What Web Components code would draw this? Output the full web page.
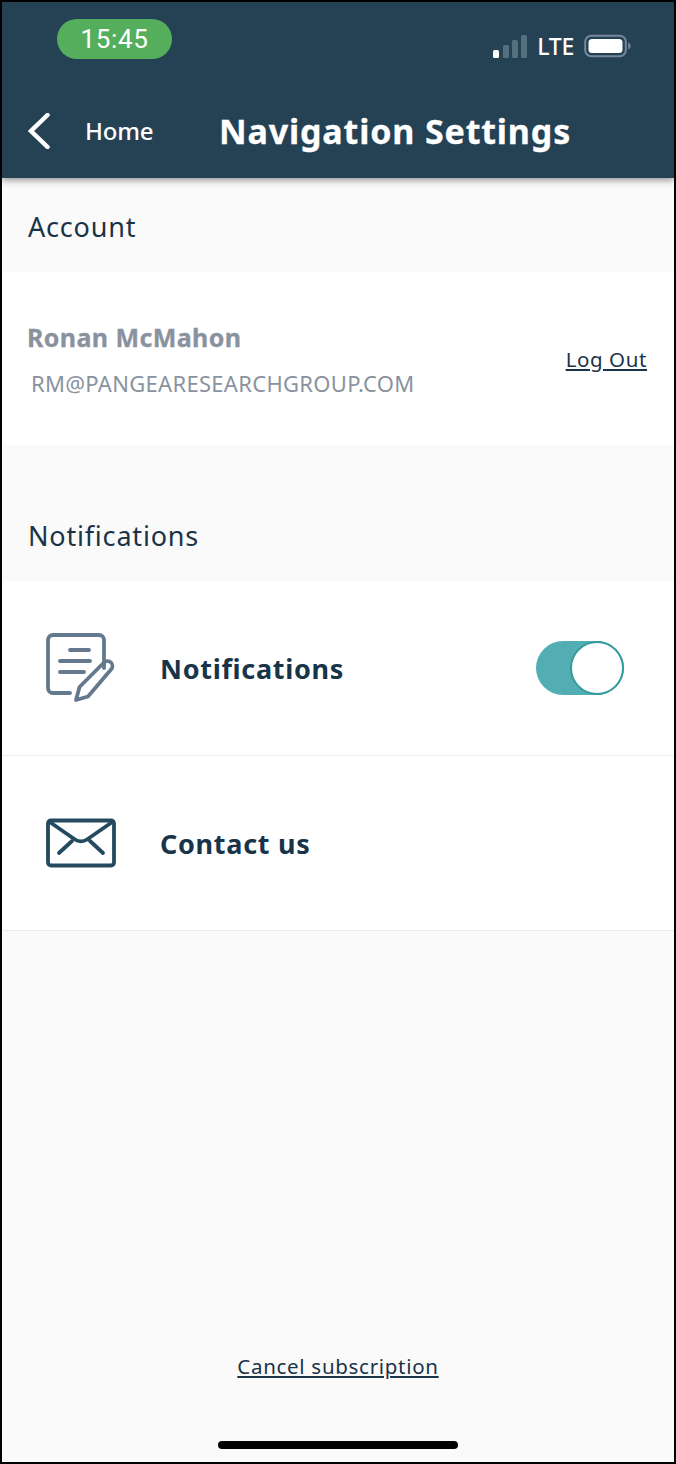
<!DOCTYPE html>
<html lang="en"><head><meta charset="utf-8"><title>Navigation Settings</title>
<style>
html,body{margin:0;padding:0;background:#fafafa}
body{width:676px;height:1464px;font-family:"Noto Sans","Open Sans",sans-serif;overflow:hidden}
</style></head><body>
<phone-frame>
  <app-header title="Navigation Settings" back="Home"></app-header>
  <section-title style="height:94px;padding-top:4px">Account</section-title>
  <account-card name="Ronan McMahon" email="RM@PANGEARESEARCHGROUP.COM" action="Log Out"></account-card>
  <section-title style="height:136px;padding-top:46px">Notifications</section-title>
  <setting-row label="Notifications" icon="note" toggle></setting-row>
  <setting-row label="Contact us" icon="mail"></setting-row>
  <page-footer link="Cancel subscription"></page-footer>
</phone-frame>
<script>
function def(name, html){
  customElements.define(name, class extends HTMLElement{
    connectedCallback(){
      if(this.shadowRoot) return;
      const r=this.attachShadow({mode:'open'});
      r.innerHTML = typeof html==='function' ? html(this) : html;
    }
  });
}
def('phone-frame',`<style>:host{display:flex;flex-direction:column;box-sizing:border-box;width:676px;height:1464px;border:2px solid #000;background:#fafafa}</style><slot></slot>`);
def('app-header',h=>`<style>
:host{display:block;height:176px;background:#254154;color:#fff;box-shadow:0 2px 7px rgba(0,0,0,.45);position:relative;z-index:1;flex:none}
.status{display:flex;justify-content:space-between;align-items:flex-start;padding:17px 43px 0 55px;height:87px;box-sizing:border-box}
.pill{width:115px;height:40px;border-radius:20px;background:#55ae5c;font:400 26px/41px Roboto,sans-serif;text-align:center;letter-spacing:.7px}
.right{display:flex;align-items:center;gap:9px;margin-top:14px}
.lte{font:500 23px/26px "Noto Sans",sans-serif;letter-spacing:-.3px;margin:0 1px 0 0}
.nav{display:flex;align-items:center;height:84px;padding-left:26px}
.home{font:500 24px/30px "Noto Sans",sans-serif;margin-left:35px;width:134px;letter-spacing:-.2px}
.title{font:700 34px/46px "Noto Sans",sans-serif;letter-spacing:.85px;white-space:nowrap;-webkit-text-stroke:.3px #fff}
svg{display:block}
</style>
<div class="status"><div class="pill">15:45</div>
<div class="right">
<svg width="35" height="24" viewBox="0 0 35 24"><rect x="0" y="16" width="6" height="8" rx="1.500" fill="#fff"/><rect x="10" y="11" width="6" height="13" rx="1.500" fill="#54707f"/><rect x="19" y="6" width="6" height="18" rx="1.500" fill="#54707f"/><rect x="28" y="1" width="6" height="23" rx="1.500" fill="#54707f"/></svg>
<span class="lte">LTE</span>
<svg width="47" height="24" viewBox="0 0 47 24"><rect x="1.200" y="1.700" width="40.600" height="20.600" rx="6" fill="none" stroke="#76889a" stroke-width="2"/><rect x="4.500" y="5" width="34" height="14" rx="3.500" fill="#fff"/><path d="M44.200 8.500c1.600.6 2.400 2 2.400 3.500s-.8 2.900-2.400 3.500z" fill="#76889a"/></svg>
</div></div>
<div class="nav">
<svg width="22" height="36" viewBox="0 0 22 36" fill="none" stroke="#fff" stroke-width="4.500" stroke-linecap="round"><path d="M19.500 2 L3 18 L19.500 34"/></svg>
<span class="home">${h.getAttribute('back')}</span>
<span class="title">${h.getAttribute('title')}</span>
</div>`);
def('section-title',`<style>:host{display:flex;align-items:center;box-sizing:border-box;padding-left:26px;font:400 27px/36px "Noto Sans",sans-serif;color:#1b3347;letter-spacing:.8px;flex:none;background:#fafafa}</style><slot></slot>`);
def('account-card',h=>`<style>
:host{display:flex;align-items:center;justify-content:space-between;box-sizing:border-box;height:173px;padding:0 27px 0 25px;background:#fff;flex:none}
.name{font:700 25px/34px "Noto Sans",sans-serif;color:#8a92a0;letter-spacing:.4px;margin-top:-1px;-webkit-text-stroke:.3px #8a92a0}
.mail{font:400 22px/28px "Noto Sans",sans-serif;color:#8a92a0;margin:15px 0 0 4px;letter-spacing:.3px}
a{font:400 20.500px/28px "Noto Sans",sans-serif;color:#1b3347;text-decoration:underline;letter-spacing:.6px}
</style><div><div class="name">${h.getAttribute('name')}</div><div class="mail">${h.getAttribute('email')}</div></div><a href="#">${h.getAttribute('action')}</a>`);
const icons={
note:`<svg width="70" height="70" viewBox="0 0 70 70" fill="none" stroke="#64798e" stroke-width="3.800" stroke-linecap="round" stroke-linejoin="round"><path d="M24 60H7a5 5 0 0 1-5-5V7a5 5 0 0 1 5-5h46a5 5 0 0 1 5 5v28"/><path d="M24 17h19M14 28h30M14 39h24"/><path d="M30 67l3.500-13L58 29.500a5 5 0 0 1 7 0 5 5 0 0 1 0 7L42 63.500z"/></svg>`,
mail:`<svg width="70" height="50" viewBox="0 0 70 50" fill="none" stroke="#254a60" stroke-width="3.800" stroke-linecap="round" stroke-linejoin="round"><rect x="2" y="2.500" width="66" height="45" rx="3"/><path d="M3 3.500l26 18c3.500 2.400 8.500 2.400 12 0l26-18" /><path d="M13 35l13-12M57 35L44 23"/></svg>`};
def('setting-row',h=>`<style>
:host{display:flex;align-items:center;box-sizing:border-box;height:175px;background:#fff;border-bottom:1px solid #ececec;padding-left:44px;flex:none}
.ic{width:70px;display:flex;align-items:center;justify-content:center;margin-right:44px;flex:none}
.lb{font:700 27px/36px "Noto Sans",sans-serif;color:#183449;letter-spacing:.7px;flex:1;padding-top:2px}
.tg{width:88px;height:54px;box-sizing:border-box;border-radius:27px;background:#52aeb2;margin-right:50px;position:relative;flex:none}
.tg::after{content:"";position:absolute;right:0;top:0;width:54px;height:54px;box-sizing:border-box;border-radius:50%;background:#fff;border:2px solid #339a9e}
svg{display:block}
</style><div class="ic">${icons[h.getAttribute('icon')]}</div><div class="lb">${h.getAttribute('label')}</div>${h.hasAttribute('toggle')?'<div class="tg" role="switch" aria-checked="true"></div>':''}`);
def('page-footer',h=>`<style>
:host{display:flex;flex-direction:column;align-items:center;justify-content:flex-end;flex:1;padding-bottom:13px;background:#fafafa}
a{font:400 20.500px/28px "Noto Sans",sans-serif;color:#1b3347;letter-spacing:.7px;text-decoration:underline}
.bar{width:240px;height:8px;border-radius:4px;background:#000;margin-top:61px}
</style><a href="#">${h.getAttribute('link')}</a><div class="bar"></div>`);
</script>
</body></html>
